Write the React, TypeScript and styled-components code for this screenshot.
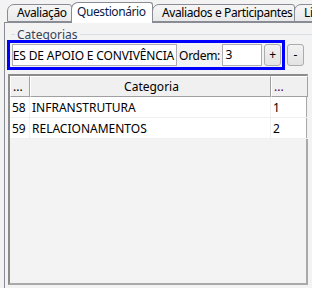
import styled, { createGlobalStyle } from 'styled-components'

const GlobalStyle = createGlobalStyle`
  html, body {
    margin: 0;
    padding: 0;
    background: #f3f3f3;
  }
  body {
    font-family: "Noto Sans", "Open Sans", sans-serif;
    font-size: 12px;
    color: #000;
  }
`

const tabs = [
  { label: 'Avaliação', width: 65 },
  { label: 'Questionário', width: 82, active: true },
  { label: 'Avaliados e Participantes', width: 143 },
  { label: 'Lista', width: 40 },
]

const rows = [
  { id: 58, name: 'INFRANSTRUTURA', order: 1 },
  { id: 59, name: 'RELACIONAMENTOS', order: 2 },
]

export default function App() {
  return (
    <>
      <GlobalStyle />
      <Window>
        <TabStrip>
          {tabs.map((t) => (
            <Tab key={t.label} $active={!!t.active} style={{ width: t.width }}>
              {t.label}
            </Tab>
          ))}
        </TabStrip>
        <Panel>
          <GroupHeader>
            <GroupDash />
            <GroupLabel>Categorias</GroupLabel>
            <GroupLine />
          </GroupHeader>
          <EditRow>
            <Highlight>
              <NameField>
                <span>ATIVIDADES DE APOIO E CONVIVÊNCIA</span>
              </NameField>
              <FieldLabel>Ordem:</FieldLabel>
              <OrderField>3</OrderField>
              <SmallButton>+</SmallButton>
            </Highlight>
            <SmallButton>-</SmallButton>
          </EditRow>
          <Grid>
            <HeaderRow>
              <HeaderCell>...</HeaderCell>
              <HeaderCell $center>Categoria</HeaderCell>
              <HeaderCell $purple>...</HeaderCell>
            </HeaderRow>
            {rows.map((r) => (
              <DataRow key={r.id}>
                <DataCell>{r.id}</DataCell>
                <DataCell>{r.name}</DataCell>
                <DataCell>{r.order}</DataCell>
              </DataRow>
            ))}
          </Grid>
        </Panel>
      </Window>
    </>
  )
}

const Window = styled.div`
  width: 312px;
  height: 288px;
  overflow: hidden;
  display: flex;
  flex-direction: column;
  background: #f3f3f3;
`

const TabStrip = styled.div`
  display: flex;
  align-items: flex-end;
  height: 22px;
  padding-left: 7px;
  position: relative;
  z-index: 1;
`

const Tab = styled.div<{ $active: boolean }>`
  flex: none;
  box-sizing: border-box;
  height: ${(p) => (p.$active ? '21px' : '18px')};
  margin-bottom: ${(p) => (p.$active ? '-1px' : '0')};
  padding-left: ${(p) => (p.$active ? '5px' : '9px')};
  border: 1px solid #898c95;
  border-bottom: ${(p) => (p.$active ? 'none' : '1px solid #898c95')};
  border-radius: 7px 3px 0 0;
  background: ${(p) =>
    p.$active ? '#ffffff' : 'linear-gradient(#f6f6f6, #e9e9e9)'};
  margin-right: -1px;
  white-space: nowrap;
  overflow: hidden;
  letter-spacing: -0.4px;
  line-height: ${(p) => (p.$active ? '18px' : '16px')};
  color: ${(p) => (p.$active ? '#0c1b45' : '#000')};
`

const Panel = styled.div`
  flex: 1;
  margin-left: 4px;
  border-left: 1px solid #898c95;
  border-top: 1px solid #898c95;
  padding: 4px 0 0 2px;
  display: flex;
  flex-direction: column;
  min-height: 0;
`

const GroupHeader = styled.div`
  display: flex;
  align-items: center;
  height: 13px;
  margin-top: 1px;
  margin-bottom: -1px;
`

const GroupDash = styled.div`
  width: 4px;
  margin-left: 4px;
  border-top: 1px solid #d5dfe5;
`

const GroupLabel = styled.div`
  padding: 0 2px;
  color: #34435a;
  line-height: 13px;
`

const GroupLine = styled.div`
  flex: 1;
  border-top: 1px solid #d5dfe5;
`

const EditRow = styled.div`
  display: flex;
  align-items: center;
  height: 30px;
`

const Highlight = styled.div`
  box-sizing: border-box;
  width: 278px;
  height: 30px;
  border: 3px solid #0000ff;
  display: flex;
  align-items: center;
  padding: 0 1px;
`

const NameField = styled.div`
  box-sizing: border-box;
  width: 167px;
  height: 22px;
  margin-left: 1px;
  border: 1px solid #abadb3;
  background: #fff;
  display: flex;
  justify-content: flex-end;
  align-items: center;
  overflow: hidden;
  white-space: nowrap;
  padding-right: 2px;
  letter-spacing: -0.15px;
`

const FieldLabel = styled.div`
  margin-left: 2px;
  width: 43px;
  letter-spacing: -0.3px;
`

const OrderField = styled.div`
  box-sizing: border-box;
  width: 41px;
  height: 22px;
  border: 1px solid #abadb3;
  background: #fff;
  padding-left: 3px;
  line-height: 20px;
`

const SmallButton = styled.div`
  box-sizing: border-box;
  width: 17px;
  height: 22px;
  margin-left: 2px;
  border: 1px solid #acacac;
  border-radius: 3px;
  background: linear-gradient(#f2f2f2, #e3e3e3);
  display: flex;
  align-items: center;
  justify-content: center;
  line-height: 20px;
`

const Grid = styled.div`
  box-sizing: border-box;
  width: 300px;
  height: 211px;
  margin-top: 4px;
  margin-left: 1px;
  border: 2px solid #8b8b8b;
  border-right-color: #a9a9a9;
  border-bottom-color: #a9a9a9;
  background: #f3f3f3;
`

const HeaderRow = styled.div`
  display: grid;
  grid-template-columns: 20px 241px 37px;
  height: 21px;
`

const HeaderCell = styled.div<{ $center?: boolean; $purple?: boolean }>`
  box-sizing: border-box;
  border: 1px solid #a0a0a0;
  border-top-color: #fff;
  border-left-color: #fff;
  background: #f0f0f0;
  padding-left: 2px;
  line-height: 19px;
  text-align: ${(p) => (p.$center ? 'center' : 'left')};
  color: ${(p) => (p.$purple ? '#4b0058' : '#000')};
`

const DataRow = styled.div`
  display: grid;
  grid-template-columns: 20px 241px 37px;
  height: 21px;
  background: #fff;
`

const DataCell = styled.div`
  box-sizing: border-box;
  border-right: 1px solid #f0f0f0;
  border-bottom: 1px solid #f0f0f0;
  padding-left: 2px;
  line-height: 21px;
  white-space: nowrap;
  overflow: hidden;
`
